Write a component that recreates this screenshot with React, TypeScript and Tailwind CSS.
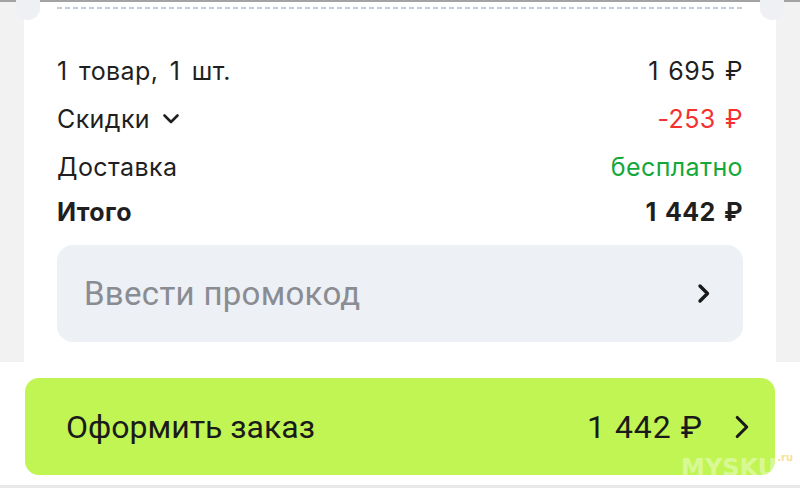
import { ChevronRight } from "lucide-react";

const font = { fontFamily: "Inter, 'Noto Sans', sans-serif" };

function Row({ label, value, className }: { label: React.ReactNode; value: React.ReactNode; className: string }) {
  return (
    <div className={`flex items-center justify-between ${className}`}>
      {label}
      {value}
    </div>
  );
}

export default function App() {
  return (
    <div className="relative flex h-[488px] w-[800px] flex-col overflow-hidden bg-[#f2f2f2] text-[#1f1f1f]" style={font}>
      <div className="h-[2px] bg-[#a3a3a3]" />

      {/* order summary card */}
      <div className="relative mx-[24px] h-[360px] bg-white px-[33px]">
        <div className="absolute -left-[8px] -top-[14px] h-[32px] w-[24px] rounded-full bg-[#eef0f3]" />
        <div className="absolute -right-[8px] -top-[14px] h-[32px] w-[24px] rounded-full bg-[#eef0f3]" />
        <div className="mt-[5px] h-[2px] bg-[repeating-linear-gradient(90deg,#c3cedc_0_5px,transparent_5px_8px)]" />

        <div className="mt-[38px] text-[25px] leading-none tracking-[0.4px] [word-spacing:2px]">
          <Row className="h-[48px]" label={<span className="[word-spacing:4px]">1 товар, 1 шт.</span>} value={<span>1 695 ₽</span>} />
          <Row
            className="h-[48px]"
            label={
              <span className="flex items-center gap-[12px]">
                Скидки
                <svg width="18" height="12" viewBox="0 0 18 12" fill="none">
                  <path d="M2.5 2.5l6.5 6.5 6.5-6.5" stroke="#1f1f1f" strokeWidth="2.6" strokeLinecap="round" strokeLinejoin="round" />
                </svg>
              </span>
            }
            value={<span className="text-[#f5302f]">-253 ₽</span>}
          />
          <Row className="h-[49px]" label={<span>Доставка</span>} value={<span className="text-[#12a83a]">бесплатно</span>} />
          <Row className="h-[40px] font-bold" label={<span>Итого</span>} value={<span>1 442 ₽</span>} />
        </div>

        <div className="mt-[13px] flex h-[97px] items-center justify-between rounded-[16px] bg-[#edf0f4] pl-[27px] pr-[32px]">
          <span className="text-[33px] tracking-[0.3px] text-[#8a8c93]" style={{ fontFamily: "Roboto, sans-serif" }}>
            Ввести промокод
          </span>
          <svg width="14" height="21" viewBox="0 0 14 21" fill="none">
            <path d="M3 3l7.5 7.5L3 18" stroke="#1a1a1a" strokeWidth="3.4" strokeLinecap="round" strokeLinejoin="round" />
          </svg>
        </div>
      </div>

      {/* checkout bar */}
      <div className="flex h-[123px] flex-col bg-white px-[25px] pt-[16px]">
        <button className="flex h-[97px] items-center rounded-[14px] bg-[#c1f553] pl-[41px] pr-[14px] text-[32px] text-[#1a1a1a]" style={{ fontFamily: "Roboto, sans-serif" }}>
          <span>Оформить заказ</span>
          <span className="ml-auto tracking-[1px]">1 442 ₽</span>
          <ChevronRight className="ml-[20px] h-[38px] w-[38px]" strokeWidth={2} />
        </button>
      </div>
      <div className="flex-1 bg-[#e9e9e9]" />

      <div className="pointer-events-none absolute left-[681px] top-[450px] flex items-start text-[24px] font-bold text-white/40" style={{ fontFamily: "'DejaVu Sans', sans-serif" }}>
        MYSKU<span className="text-[10px] text-[#f5d36b]/70">.ru</span>
      </div>
    </div>
  );
}
